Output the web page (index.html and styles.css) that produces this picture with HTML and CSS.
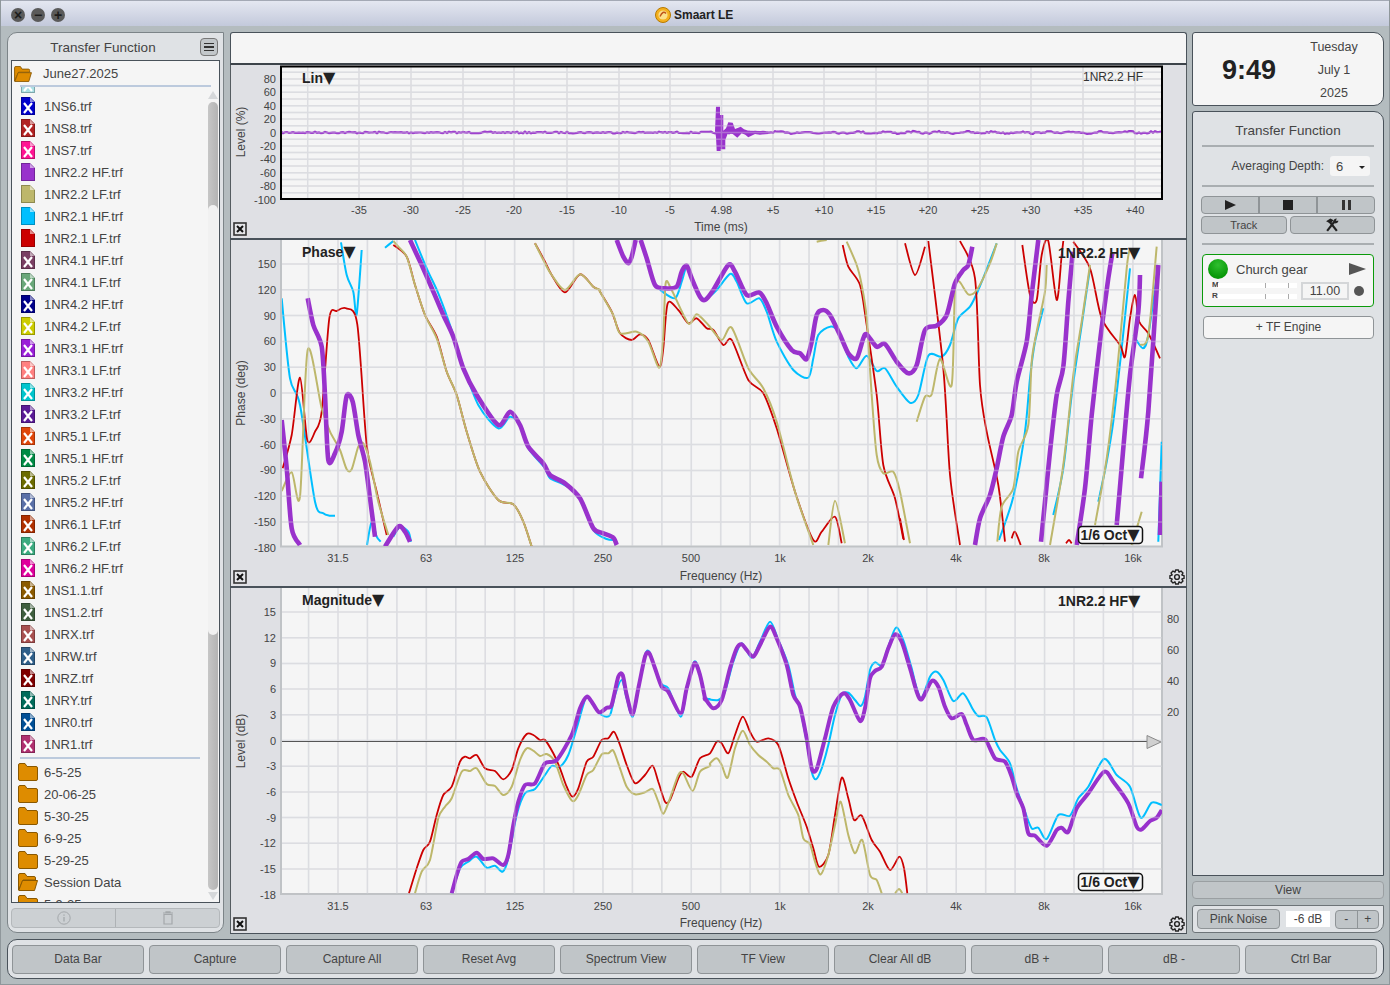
FILE: index.html
```html
<!DOCTYPE html>
<html lang="en">
<head>
<meta charset="utf-8">
<title>Smaart LE</title>
<link rel="stylesheet" href="styles.css">
</head>
<body>
<svg class="defs" width="0" height="0" aria-hidden="true">
  <symbol id="doc" viewBox="0 0 14 18">
    <path d="M0 0H9L14 5V18H0Z" fill="currentColor"/>
    <path d="M.5 .5H8.8L13.5 5.2V17.5H.5Z" fill="none" stroke="#000" stroke-opacity=".25"/>
    <path d="M9 0.6L13.4 5H9Z" fill="#fff" fill-opacity=".55"/>
  </symbol>
  <symbol id="docx" viewBox="0 0 14 18">
    <path d="M0 0H9L14 5V18H0Z" fill="currentColor"/>
    <path d="M.5 .5H8.8L13.5 5.2V17.5H.5Z" fill="none" stroke="#000" stroke-opacity=".25"/>
    <path d="M9 0.6L13.4 5H9Z" fill="#fff" fill-opacity=".55"/>
    <path d="M3 6L11 16M11 6L3 16" stroke="#fff" stroke-width="2.2" fill="none"/>
  </symbol>
  <symbol id="folder" viewBox="0 0 20 18">
    <path d="M.5 2Q.5 .5 2 .5H7L9 3.5H18Q19.5 3.5 19.5 5V16Q19.5 17.5 18 17.5H2Q.5 17.5 .5 16Z" fill="#de8c00" stroke="#8a5800"/>
  </symbol>
  <symbol id="folder-open" viewBox="0 0 20 18">
    <path d="M.5 2Q.5 .5 2 .5H7L9 3.5H16Q17.5 3.5 17.5 5V7H5L.5 17Z" fill="#de8c00" stroke="#8a5800"/>
    <path d="M4.5 7.5H19.5L16.5 17.5H.8Z" fill="#de8c00" stroke="#8a5800"/>
  </symbol>
</svg>

<div class="window">
  <header class="titlebar">
    <div class="lights">
      <span class="light">×</span><span class="light">−</span><span class="light">+</span>
    </div>
    <div class="title">
      <svg class="logo" viewBox="0 0 16 16"><circle cx="8" cy="8" r="7.5" fill="#f4b01e" stroke="#b87a00"/><circle cx="8" cy="8" r="4.6" fill="#fbe08a"/><path d="M5 9.5Q8 3 11 6.5" stroke="#c0541a" stroke-width="1.4" fill="none"/></svg>
      <span>Smaart LE</span>
    </div>
  </header>

  <div class="main">
    <aside class="left">
      <div class="left-head">
        <span class="left-title">Transfer Function</span>
        <button class="menu-btn" aria-label="Menu"><i></i><i></i><i></i></button>
      </div>
      <div class="listbox">
        <div class="session">
          <svg class="session-ico"><use href="#folder-open"/></svg>
          <span>June27.2025</span>
        </div>
        <div class="rule rule-wide"></div>
        <div class="scrollpane">
          <div class="row row-clip"><svg class="ico c-pale"><use href="#docx"/></svg></div>
          <div class="row"><svg class="ico c01"><use href="#docx"/></svg>1NS6.trf</div>
          <div class="row"><svg class="ico c02"><use href="#docx"/></svg>1NS8.trf</div>
          <div class="row"><svg class="ico c03"><use href="#docx"/></svg>1NS7.trf</div>
          <div class="row"><svg class="ico c04"><use href="#doc"/></svg>1NR2.2 HF.trf</div>
          <div class="row"><svg class="ico c05"><use href="#doc"/></svg>1NR2.2 LF.trf</div>
          <div class="row"><svg class="ico c06"><use href="#doc"/></svg>1NR2.1 HF.trf</div>
          <div class="row"><svg class="ico c07"><use href="#doc"/></svg>1NR2.1 LF.trf</div>
          <div class="row"><svg class="ico c08"><use href="#docx"/></svg>1NR4.1 HF.trf</div>
          <div class="row"><svg class="ico c09"><use href="#docx"/></svg>1NR4.1 LF.trf</div>
          <div class="row"><svg class="ico c10"><use href="#docx"/></svg>1NR4.2 HF.trf</div>
          <div class="row"><svg class="ico c11"><use href="#docx"/></svg>1NR4.2 LF.trf</div>
          <div class="row"><svg class="ico c12"><use href="#docx"/></svg>1NR3.1 HF.trf</div>
          <div class="row"><svg class="ico c13"><use href="#docx"/></svg>1NR3.1 LF.trf</div>
          <div class="row"><svg class="ico c14"><use href="#docx"/></svg>1NR3.2 HF.trf</div>
          <div class="row"><svg class="ico c15"><use href="#docx"/></svg>1NR3.2 LF.trf</div>
          <div class="row"><svg class="ico c16"><use href="#docx"/></svg>1NR5.1 LF.trf</div>
          <div class="row"><svg class="ico c17"><use href="#docx"/></svg>1NR5.1 HF.trf</div>
          <div class="row"><svg class="ico c18"><use href="#docx"/></svg>1NR5.2 LF.trf</div>
          <div class="row"><svg class="ico c19"><use href="#docx"/></svg>1NR5.2 HF.trf</div>
          <div class="row"><svg class="ico c20"><use href="#docx"/></svg>1NR6.1 LF.trf</div>
          <div class="row"><svg class="ico c21"><use href="#docx"/></svg>1NR6.2 LF.trf</div>
          <div class="row"><svg class="ico c22"><use href="#docx"/></svg>1NR6.2 HF.trf</div>
          <div class="row"><svg class="ico c23"><use href="#docx"/></svg>1NS1.1.trf</div>
          <div class="row"><svg class="ico c24"><use href="#docx"/></svg>1NS1.2.trf</div>
          <div class="row"><svg class="ico c25"><use href="#docx"/></svg>1NRX.trf</div>
          <div class="row"><svg class="ico c26"><use href="#docx"/></svg>1NRW.trf</div>
          <div class="row"><svg class="ico c27"><use href="#docx"/></svg>1NRZ.trf</div>
          <div class="row"><svg class="ico c28"><use href="#docx"/></svg>1NRY.trf</div>
          <div class="row"><svg class="ico c29"><use href="#docx"/></svg>1NR0.trf</div>
          <div class="row"><svg class="ico c30"><use href="#docx"/></svg>1NR1.trf</div>
          <div class="rule rule-narrow"></div>
          <div class="row row-folder"><svg class="fold"><use href="#folder"/></svg>6-5-25</div>
          <div class="row row-folder"><svg class="fold"><use href="#folder"/></svg>20-06-25</div>
          <div class="row row-folder"><svg class="fold"><use href="#folder"/></svg>5-30-25</div>
          <div class="row row-folder"><svg class="fold"><use href="#folder"/></svg>6-9-25</div>
          <div class="row row-folder"><svg class="fold"><use href="#folder"/></svg>5-29-25</div>
          <div class="row row-folder"><svg class="fold"><use href="#folder-open"/></svg>Session Data</div>
          <div class="row row-folder"><svg class="fold"><use href="#folder"/></svg>5-9-25</div>
        </div>
        <div class="scroll-up"></div>
        <div class="scroll-track"><div class="scroll-thumb"></div></div>
        <div class="scroll-down"></div>
      </div>
      <div class="left-tools">
        <div class="tool">
          <svg width="14" height="14" viewBox="0 0 14 14"><circle cx="7" cy="7" r="6.2" fill="none" stroke="#a4a8ab"/><path d="M7 6V10.5M7 3.4V4.8" stroke="#a4a8ab" stroke-width="1.3"/></svg>
        </div>
        <div class="tool">
          <svg width="12" height="14" viewBox="0 0 12 14"><path d="M2 3.5H10V13H2ZM1 2H11M4 2V.8H8V2" fill="none" stroke="#a4a8ab" stroke-width="1.2"/></svg>
        </div>
      </div>
    </aside>

    <section class="center">
      <div class="strip"></div>
      <div class="panel panel-imp"><svg id="chart-imp" class="chart" viewBox="230 65 957 174"></svg></div>
      <div class="panel panel-phase"><svg id="chart-phase" class="chart" viewBox="230 239 957 348"></svg></div>
      <div class="panel panel-mag"><svg id="chart-mag" class="chart" viewBox="230 587 957 347"></svg></div>
    </section>

    <aside class="right">
      <div class="clock">
        <div class="time">9:49</div>
        <div class="date"><span>Tuesday</span><span>July 1</span><span>2025</span></div>
      </div>
      <div class="control">
        <div class="ctl-title">Transfer Function</div>
        <div class="hr"></div>
        <div class="avg">
          <span>Averaging Depth:</span>
          <div class="select"><span>6</span><i class="caret"></i></div>
        </div>
        <div class="hr"></div>
        <div class="transport">
          <div class="seg"><svg width="11" height="10" viewBox="0 0 11 10"><path d="M0 0L11 5L0 10Z" fill="#222"/></svg></div>
          <div class="seg"><svg width="10" height="10" viewBox="0 0 10 10"><path d="M0 0H10V10H0Z" fill="#222"/></svg></div>
          <div class="seg"><svg width="9" height="10" viewBox="0 0 9 10"><path d="M0 0H3V10H0ZM6 0H9V10H6Z" fill="#333"/></svg></div>
        </div>
        <div class="track-row">
          <div class="mini">Track</div>
          <div class="mini"><svg width="14" height="14" viewBox="0 0 13 13"><path d="M2 12L9 3M11 12L4 3" stroke="#222" stroke-width="2" fill="none"/><path d="M1 3L5 .5 8 2 5 5ZM8 3Q8 .5 11 .5L10 2.500 12.500 2.500Q12 5 9 5Z" fill="#222"/></svg></div>
        </div>
        <div class="hr hr-engine"></div>
        <div class="engine">
          <div class="engine-top">
            <span class="led"></span>
            <span class="engine-name">Church gear</span>
            <svg class="engine-play" width="17" height="12" viewBox="0 0 17 12"><path d="M0 0L17 6L0 12Z" fill="#555"/></svg>
          </div>
          <div class="engine-bottom">
            <div class="meters">
              <div class="meter"><b>M</b><span class="bar"><i></i><i></i></span></div>
              <div class="meter"><b>R</b><span class="bar"><i></i><i></i></span></div>
            </div>
            <div class="delay">11.00</div>
            <span class="dot"></span>
          </div>
        </div>
        <div class="add-engine">+ TF Engine</div>
      </div>
      <div class="view-btn">View</div>
      <div class="noise">
        <div class="noise-btn">Pink Noise</div>
        <div class="noise-val">-6 dB</div>
        <div class="stepper"><span>-</span><span>+</span></div>
      </div>
    </aside>
  </div>

  <footer class="bottom">
    <div class="bar-btn">Data Bar</div>
    <div class="bar-btn">Capture</div>
    <div class="bar-btn">Capture All</div>
    <div class="bar-btn">Reset Avg</div>
    <div class="bar-btn">Spectrum View</div>
    <div class="bar-btn">TF View</div>
    <div class="bar-btn">Clear All dB</div>
    <div class="bar-btn">dB +</div>
    <div class="bar-btn">dB -</div>
    <div class="bar-btn">Ctrl Bar</div>
  </footer>
</div>
<script src="charts.js"></script>
</body>
</html>
```
FILE: styles.css
```css
* { box-sizing: border-box; }
html, body { margin: 0; padding: 0; }
body {
  width: 1390px;
  height: 985px;
  overflow: hidden;
  font-family: "Liberation Sans", Arial, sans-serif;
  color: #333;
  background: #b4bcbf;
}
.defs { position: absolute; }
.window {
  width: 1390px;
  height: 985px;
  display: flex;
  flex-direction: column;
  border: 1px solid #8f979b;
  border-top: 0;
}

/* title bar */
.titlebar {
  height: 26px;
  flex: none;
  display: flex;
  align-items: center;
  position: relative;
  padding-top: 2px;
  background: linear-gradient(#e4e7f1, #c3c9db);
  border-top: 1px solid #a4a9b5;
}
.lights { display: flex; gap: 6px; padding-left: 10px; }
.light {
  width: 14px;
  height: 14px;
  border-radius: 50%;
  background: #5a5a5a;
  color: #1c1c1c;
  font-size: 14px;
  font-weight: bold;
  line-height: 14px;
  text-align: center;
}
.title {
  position: absolute;
  left: 654px;
  top: 6px;
  display: flex;
  align-items: center;
  gap: 3px;
  font-size: 12px;
  font-weight: bold;
  color: #222;
}
.logo { width: 16px; height: 16px; }

/* main columns */
.main {
  flex: none;
  height: 908px;
  display: flex;
  padding: 6px 5px 0 6px;
}

/* left panel */
.left {
  width: 217px;
  height: 901px;
  flex: none;
  margin-right: 6px;
  background: #dfe2e5;
  border: 1px solid #7c8488;
  border-radius: 10px 0 10px 10px;
  padding: 0 3px;
  display: flex;
  flex-direction: column;
}
.left-head {
  height: 27px;
  flex: none;
  display: flex;
  align-items: center;
  position: relative;
  padding-top: 2px;
}
.left-title { width: 184px; text-align: center; font-size: 13.5px; color: #444; }
.menu-btn {
  position: absolute;
  left: 189px;
  top: 5px;
  width: 18px;
  height: 18px;
  padding: 0;
  border: 1px solid #777;
  border-radius: 4px;
  background: #c2c7ca;
  display: flex;
  flex-direction: column;
  align-items: center;
  justify-content: center;
  gap: 2px;
}
.menu-btn i { display: block; width: 10px; height: 1.5px; background: #333; }
.listbox {
  width: 209px;
  height: 843px;
  flex: none;
  position: relative;
  background: #f5f5f5;
  border: 1px solid #49525a;
  display: flex;
  flex-direction: column;
}
.session {
  height: 24px;
  flex: none;
  display: flex;
  align-items: center;
  font-size: 13px;
  color: #444;
  padding: 1px 0 0 2px;
}
.session-ico { width: 18px; height: 16px; margin-right: 11px; }
.rule { height: 2px; flex: none; background: #bccadd; }
.rule-wide { width: 191px; margin-left: 8px; }
.rule-narrow { width: 180px; margin: 2px 0 2px 8px; }
.scrollpane { flex: 1; overflow: hidden; }
.row {
  height: 22px;
  display: flex;
  align-items: center;
  font-size: 13px;
  color: #444;
  padding-left: 9px;
}
.row-clip { margin-top: -14px; }
.ico { width: 14px; height: 18px; margin-right: 9px; flex: none; }
.row-folder { padding-left: 6px; }
.fold { width: 20px; height: 18px; margin-right: 6px; flex: none; }
.scroll-track {
  position: absolute;
  left: 196px;
  top: 41px;
  width: 10px;
  height: 788px;
  border-radius: 5px;
  background: linear-gradient(90deg, #c6c6c6, #b4b4b4);
}
.scroll-thumb {
  position: absolute;
  left: 0;
  top: 103px;
  width: 10px;
  height: 430px;
  border-radius: 5px;
  background: #f1f1f1;
}
.scroll-up, .scroll-down { position: absolute; left: 196px; width: 0; height: 0; border-left: 5px solid transparent; border-right: 5px solid transparent; }
.scroll-up { top: 30px; border-bottom: 8px solid #d6d8da; }
.scroll-down { top: 831px; border-top: 8px solid #d6d8da; }
.left-tools {
  width: 209px;
  height: 20px;
  flex: none;
  margin-top: 5px;
  display: flex;
  background: #ccd0d3;
  border: 1px solid #b4b8bb;
  border-radius: 4px;
}
.tool { flex: 1; display: flex; align-items: center; justify-content: center; }
.tool + .tool { border-left: 1px solid #aeb2b5; }

/* center */
.center {
  width: 957px;
  flex: none;
  height: 902px;
  display: flex;
  flex-direction: column;
  margin-right: 5px;
}
.strip {
  height: 33px;
  flex: none;
  background: #f5f5f5;
  border: 1px solid #49525a;
  border-bottom: 2px solid #3d444a;
  border-radius: 3px 3px 0 0;
}
.panel { flex: none; background: #dfe0e4; border-left: 1px solid #555c60; border-right: 1px solid #555c60; }
.panel-imp { height: 174px; }
.panel-phase { height: 348px; }
.panel-mag { height: 347px; }
.chart { display: block; width: 957px; margin-left: -1px; height: 100%; font-family: "Liberation Sans", Arial, sans-serif; }

/* right */
.right { width: 192px; flex: none; display: flex; flex-direction: column; }
.clock {
  height: 74px;
  flex: none;
  display: flex;
  align-items: center;
  background: #f5f5f5;
  border: 1px solid #49525a;
  border-radius: 3px 10px 10px 3px;
}
.time { width: 112px; text-align: center; font-size: 27px; font-weight: bold; color: #222; margin-top: 2px; }
.date { width: 58px; margin-top: 2px; display: flex; flex-direction: column; align-items: center; gap: 8px; font-size: 12.500px; line-height: 15px; color: #444; }
.control {
  height: 765px;
  flex: none;
  margin-top: 5px;
  background: #dfe2e5;
  border: 1px solid #49525a;
  border-radius: 3px 10px 0 0;
  padding: 0 8px 0 8px;
}
.ctl-title { text-align: center; font-size: 13.5px; color: #444; line-height: 16px; margin-top: 11px; height: 22px; }
.hr { height: 2px; background: #a9aeb1; margin: 0 1px; }
.avg { height: 38px; display: flex; align-items: center; justify-content: flex-end; gap: 6px; font-size: 12px; color: #444; padding-right: 5px; }
.select {
  width: 40px;
  height: 20px;
  background: #f5f5f5;
  border-radius: 3px;
  display: flex;
  align-items: center;
  justify-content: space-between;
  padding: 0 5px 0 6px;
  font-size: 13px;
}
.caret { width: 0; height: 0; margin-top: 3px; border-left: 3px solid transparent; border-right: 3px solid transparent; border-top: 3px solid #222; }
.transport {
  height: 18px;
  margin-top: 9px;
  display: flex;
  background: #c0c5c8;
  border: 1px solid #8f9497;
  border-radius: 4px;
}
.seg { flex: 1; display: flex; align-items: center; justify-content: center; }
.seg + .seg { border-left: 2px solid #8f9497; }
.track-row { display: flex; gap: 3px; margin-top: 2px; }
.mini {
  flex: 1;
  height: 18px;
  display: flex;
  align-items: center;
  justify-content: center;
  background: #c0c5c8;
  border: 1px solid #8f9497;
  border-radius: 4px;
  font-size: 11px;
  color: #444;
}
.hr-engine { margin-top: 9px; }
.engine {
  height: 53px;
  margin: 9px 1px 0;
  background: #f5f5f5;
  border: 1px solid #0a9a0a;
  border-radius: 4px;
  padding: 4px 7px 0 5px;
}
.engine-top { display: flex; align-items: center; height: 20px; }
.led {
  width: 20px;
  height: 20px;
  border-radius: 50%;
  background: radial-gradient(circle at 50% 30%, #2fbf2f, #089808 70%);
  flex: none;
}
.engine-name { margin-left: 8px; font-size: 13px; color: #444; flex: 1; }
.engine-bottom { display: flex; align-items: center; margin-top: 1px; }
.meters { width: 93px; flex: none; padding-left: 4px; display: flex; flex-direction: column; gap: 1px; }
.meter { display: flex; align-items: center; height: 10px; }
.meter b { width: 6px; font-size: 8px; color: #444; flex: none; line-height: 10px; }
.bar { display: block; position: relative; width: 79px; height: 5px; background: #fff; }
.bar i { position: absolute; top: 0; width: 1px; height: 5px; background: #aaa; }
.bar i:first-child { left: 47px; }
.bar i:last-child { left: 70px; }
.delay {
  width: 48px;
  height: 18px;
  background: #f5f5f5;
  border: 2px solid #d4d6d8;
  font-size: 12.500px;
  line-height: 15px;
  text-align: center;
  color: #444;
}
.dot { width: 10px; height: 10px; border-radius: 50%; background: #555; margin-left: 5px; flex: none; }
.add-engine {
  height: 23px;
  margin: 9px 1px 0 2px;
  background: #f5f5f5;
  border: 1px solid #8f9497;
  border-radius: 4px;
  font-size: 12px;
  line-height: 21px;
  text-align: center;
  color: #444;
}
.view-btn {
  height: 18px;
  flex: none;
  margin-top: 5px;
  background: #c0c5c8;
  border: 1px solid #9a9fa2;
  border-radius: 4px;
  font-size: 12px;
  line-height: 17px;
  text-align: center;
  color: #444;
}
.noise {
  height: 28px;
  flex: none;
  margin-top: 6px;
  display: flex;
  align-items: center;
  background: #dfe2e5;
  border: 1px solid #6d7478;
  border-radius: 3px 0 10px 3px;
  padding: 0 4px;
  font-size: 12px;
  color: #444;
}
.noise-btn {
  width: 83px;
  height: 20px;
  background: #c0c5c8;
  border: 1px solid #8f9497;
  border-radius: 4px;
  line-height: 18px;
  text-align: center;
}
.noise-val { width: 44px; height: 16px; margin-left: 6px; background: #fff; text-align: center; line-height: 16px; }
.stepper {
  width: 44px;
  height: 19px;
  margin-left: 5px;
  display: flex;
  background: #c0c5c8;
  border: 1px solid #8f9497;
  border-radius: 4px;
  line-height: 17px;
  text-align: center;
}
.stepper span { flex: 1; }
.stepper span + span { border-left: 1px solid #8f9497; }

/* bottom bar */
.bottom {
  height: 40px;
  flex: none;
  margin: 5px 5px 0 6px;
  display: flex;
  align-items: center;
  gap: 5px;
  padding: 0 7px 0 4px;
  background: #dfe2e5;
  border: 1px solid #49525a;
  border-radius: 10px;
}
.bar-btn {
  width: 132px;
  height: 29px;
  flex: none;
  background: #c0c5c8;
  border: 1px solid #8f9497;
  border-radius: 4px;
  font-size: 12px;
  line-height: 27px;
  text-align: center;
  color: #444;
}

/* file icon colours */
.c-pale { color: #a9dfe4; }
.c01 { color: #0000cd; } .c02 { color: #b22222; } .c03 { color: #ff1493; }
.c04 { color: #9932cc; } .c05 { color: #bdb76b; } .c06 { color: #00bfff; }
.c07 { color: #cc0000; } .c08 { color: #7a3f63; } .c09 { color: #6aa87a; }
.c10 { color: #00008b; } .c11 { color: #cdcd00; } .c12 { color: #9a1fd8; }
.c13 { color: #ff8080; } .c14 { color: #00c5cd; } .c15 { color: #5a1a96; }
.c16 { color: #e0460a; } .c17 { color: #008b45; } .c18 { color: #6b6b00; }
.c19 { color: #5a70a8; } .c20 { color: #b03000; } .c21 { color: #3cab80; }
.c22 { color: #e0009c; } .c23 { color: #8b5a00; } .c24 { color: #3f5f3f; }
.c25 { color: #a85050; } .c26 { color: #2f5f8a; } .c27 { color: #800000; }
.c28 { color: #006b5a; } .c29 { color: #004f96; } .c30 { color: #b03070; }

/* chart internals */
.plot-bg { fill: #f5f5f5; }
.grid { stroke: #dcdde1; stroke-width: 1.5; fill: none; }
.grid-over { opacity: .35; }
.divider { stroke: #49525a; stroke-width: 1; }
.frame-black { fill: none; stroke: #000; stroke-width: 2; }
.frame-grey { fill: none; stroke: #c0c3c6; stroke-width: 2; }
.tick { font-size: 11px; fill: #444; }
.axis { font-size: 12px; fill: #444; }
.head { font-size: 14px; font-weight: bold; fill: #222; }
.head-small { font-size: 12px; fill: #333; }
.tri { font-family: "DejaVu Sans", sans-serif; font-size: 16px; }
.tr { fill: none; stroke-linejoin: round; stroke-linecap: butt; }
.tr-purple { stroke: #9932cc; stroke-width: 4.600; }
.tr-purple-m { stroke: #9932cc; stroke-width: 4; }
.tr-blue { stroke: #00bfff; stroke-width: 2; }
.tr-red { stroke: #cc0000; stroke-width: 1.800; }
.tr-tan { stroke: #bdb76b; stroke-width: 2; }
.zero { stroke: #555; stroke-width: 1; }
.imp-fill { fill: #9932cc; }
.imp-line { fill: none; stroke: #9932cc; stroke-width: 2.200; }
.close-box { fill: #e4e5e8; stroke: #333; stroke-width: 1.600; }
.close-x { stroke: #111; stroke-width: 2; }
.badge { fill: #f8f8f8; stroke: #111; stroke-width: 1.500; }
.gear { fill: none; stroke: #222; stroke-width: 1.400; stroke-linejoin: round; }
.marker { fill: #d0d0d0; stroke: #8a8a8a; }
```
FILE: charts.js
```js
(function () {
  var NS = 'http://www.w3.org/2000/svg';
  function el(parent, name, attrs, text) {
    var e = document.createElementNS(NS, name);
    for (var k in attrs) e.setAttribute(k, attrs[k]);
    if (text !== undefined) e.textContent = text;
    parent.appendChild(e);
    return e;
  }
  function hline(p, x1, x2, y, cls) { el(p, 'line', { x1: x1, x2: x2, y1: y, y2: y, 'class': cls }); }
  function vline(p, x, y1, y2, cls) { el(p, 'line', { x1: x, x2: x, y1: y1, y2: y2, 'class': cls }); }

  // a flat [zx,zy,zx,zy...] list measured on a 3x crop with origin (ox,oy)
  function pts(ox, oy, flat) {
    var out = [];
    for (var i = 0; i < flat.length; i += 2) out.push([ox + flat[i] / 3, oy + flat[i + 1] / 3]);
    return out;
  }
  // Catmull-Rom through the points, gently
  function smooth(p) {
    var d = 'M' + p[0][0].toFixed(1) + ' ' + p[0][1].toFixed(1);
    var t = 0.14;
    for (var i = 0; i < p.length - 1; i++) {
      var a = p[Math.max(i - 1, 0)], b = p[i], c = p[i + 1], e = p[Math.min(i + 2, p.length - 1)];
      d += 'C' + (b[0] + (c[0] - a[0]) * t).toFixed(1) + ' ' + (b[1] + (c[1] - a[1]) * t).toFixed(1) + ' ' +
        (c[0] - (e[0] - b[0]) * t).toFixed(1) + ' ' + (c[1] - (e[1] - b[1]) * t).toFixed(1) + ' ' +
        c[0].toFixed(1) + ' ' + c[1].toFixed(1);
    }
    return d;
  }
  function trace(p, cls, segs) {
    segs.forEach(function (s) { el(p, 'path', { d: smooth(s), 'class': 'tr ' + cls }); });
  }
  function closeBox(svg, y) {
    el(svg, 'rect', { x: 234, y: y, width: 12, height: 12, 'class': 'close-box' });
    el(svg, 'path', { d: 'M237 ' + (y + 3) + 'L243 ' + (y + 9) + 'M243 ' + (y + 3) + 'L237 ' + (y + 9), 'class': 'close-x' });
  }
  function gear(svg, cx, cy) {
    var d = '', n = 8, R = 7.2, r = 5.3;
    for (var i = 0; i < n; i++) {
      var s = i * 2 * Math.PI / n, w = Math.PI / n;
      [[r, -w * 0.95], [R, -w * 0.5], [R, w * 0.5], [r, w * 0.95]].forEach(function (q, j) {
        d += ((i === 0 && j === 0) ? 'M' : 'L') + (cx + q[0] * Math.cos(s + q[1])).toFixed(2) + ' ' + (cy + q[0] * Math.sin(s + q[1])).toFixed(2);
      });
    }
    el(svg, 'path', { d: d + 'Z', 'class': 'gear' });
    el(svg, 'circle', { cx: cx, cy: cy, r: 2.4, 'class': 'gear' });
  }
  function clip(svg, id, x, y, w, h) {
    var c = el(svg, 'clipPath', { id: id });
    el(c, 'rect', { x: x, y: y, width: w, height: h });
    return el(svg, 'g', { 'clip-path': 'url(#' + id + ')' });
  }
  function triSpan() {
    var t = document.createElementNS(NS, 'tspan');
    t.setAttribute('class', 'tri');
    t.textContent = '▼';
    return t;
  }
  function header(svg, x, y, label) {
    el(svg, 'text', { x: x, y: y, 'class': 'head' }, label).appendChild(triSpan());
  }
  function yLabel(svg, y, label) {
    el(svg, 'text', { x: 245, y: y, transform: 'rotate(-90 245 ' + y + ')', 'text-anchor': 'middle', 'class': 'axis' }, label);
  }
  function badge(svg, y) {
    el(svg, 'rect', { x: 1078.5, y: y, width: 64, height: 17, rx: 3.5, 'class': 'badge' });
    el(svg, 'text', { x: 1080.5, y: y + 13.2, 'class': 'head' }, '1/6 Oct').appendChild(triSpan());
  }
  var X0 = 281, X1 = 1162;
  var octs = [[338, '31.5'], [426, '63'], [515, '125'], [603, '250'], [691, '500'], [780, '1k'], [868, '2k'], [956, '4k'], [1044, '8k'], [1133, '16k']];

  function drawFreqLines(p, top, bot, ys, cls) {
    ys.forEach(function (r) { if (r[0] < bot - 1) hline(p, X0, X1, r[0], cls); });
    for (var k = -1; k < 28; k++) {
      var x = 338 + 29.44 * k;
      if (x < X1) vline(p, x, top, bot, cls);
    }
  }
  function freqGrid(svg, top, bot, ys) {
    el(svg, 'rect', { x: X0, y: top, width: X1 - X0, height: bot - top, 'class': 'plot-bg' });
    drawFreqLines(svg, top, bot, ys, 'grid');
    el(svg, 'path', { d: 'M' + X0 + ' ' + top + 'V' + bot + 'H' + X1 + 'V' + top, 'class': 'frame-grey' });
    ys.forEach(function (r) {
      el(svg, 'text', { x: 276, y: r[0] + 4, 'text-anchor': 'end', 'class': 'tick' }, r[1]);
    });
    octs.forEach(function (o) {
      el(svg, 'text', { x: o[0], y: bot + 15.5, 'text-anchor': 'middle', 'class': 'tick' }, o[1]);
    });
    el(svg, 'text', { x: 721, y: bot + 33, 'text-anchor': 'middle', 'class': 'axis' }, 'Frequency (Hz)');
  }

  /* ---------- impulse ---------- */
  (function () {
    var svg = document.getElementById('chart-imp');
    var top = 66.5, bot = 199, mid = 132.5;
    el(svg, 'rect', { x: X0, y: top, width: X1 - X0, height: bot - top, 'class': 'plot-bg' });
    for (var v = -100; v <= 100; v += 10) hline(svg, X0, X1, mid - v * 0.67, 'grid');
    var xs = [[359, '-35'], [411, '-30'], [463, '-25'], [514, '-20'], [567, '-15'], [619, '-10'], [670, '-5'], [721.5, '4.98'], [773, '+5'], [824, '+10'], [876, '+15'], [928, '+20'], [980, '+25'], [1031, '+30'], [1083, '+35'], [1135, '+40']];
    vline(svg, 307.7, top, bot, 'grid');
    xs.forEach(function (o) {
      vline(svg, o[0], top, bot, 'grid');
      el(svg, 'text', { x: o[0], y: 214, 'text-anchor': 'middle', 'class': 'tick' }, o[1]);
    });
    [80, 60, 40, 20, 0, -20, -40, -60, -80, -100].forEach(function (v) {
      el(svg, 'text', { x: 276, y: mid + 4 - v * 0.67, 'text-anchor': 'end', 'class': 'tick' }, String(v));
    });
    // noise floor, deterministic
    var d = '', seed = 7, x;
    function rnd() { seed = (seed * 16807) % 2147483647; return seed / 2147483647; }
    for (x = X0; x <= X1; x += 2) {
      var w = (x > 770) ? Math.sin(x / 4.3) * 0.7 : 0;
      d += (x === X0 ? 'M' : 'L') + x.toFixed(1) + ' ' + (mid + w + (rnd() - 0.5) * 1.6).toFixed(1);
    }
    el(svg, 'path', { d: d, 'class': 'imp-line' });
    var spike = pts(600, 60, [345, 212, 348, 140, 360, 140, 360, 165, 370, 165, 370, 212, 378, 205, 385, 187, 398, 188, 405, 207, 415, 203, 422, 200, 432, 208, 445, 212, 480, 213, 505, 215, 505, 222, 480, 224, 465, 222, 445, 232, 436, 224, 425, 220, 412, 233, 398, 222, 385, 216, 376, 240, 376, 268, 362, 268, 362, 273, 350, 273, 348, 232]);
    el(svg, 'path', { d: 'M' + spike.map(function (p) { return p[0].toFixed(1) + ' ' + p[1].toFixed(1); }).join('L') + 'Z', 'class': 'imp-fill' });
    var over = el(svg, 'g', { 'class': 'grid-over' });
    for (v = -100; v <= 100; v += 10) hline(over, X0, X1, mid - v * 0.67, 'grid');
    xs.forEach(function (o) { vline(over, o[0], top, bot, 'grid'); });
    el(svg, 'rect', { x: X0, y: top, width: X1 - X0, height: bot - top, 'class': 'frame-black' });
    header(svg, 302, 83, 'Lin');
    el(svg, 'text', { x: 1143, y: 81, 'text-anchor': 'end', 'class': 'head-small' }, '1NR2.2 HF');
    yLabel(svg, 132, 'Level (%)');
    el(svg, 'text', { x: 721, y: 231, 'text-anchor': 'middle', 'class': 'axis' }, 'Time (ms)');
    hline(svg, 230, 1187, 238.5, 'divider');
    closeBox(svg, 223);
  })();

  /* ---------- phase ---------- */
  (function () {
    var svg = document.getElementById('chart-phase');
    var labs = ['150', '120', '90', '60', '30', '0', '-30', '-60', '-90', '-120', '-150', '-180'];
    var ys = labs.map(function (l, i) { return [264 + i * 25.8, l]; });
    freqGrid(svg, 240, 546.5, ys);
    var g = clip(svg, 'clip-phase', 282, 240, 880, 306);
    var A = 230, B = 600, C = 900, Y = 235;
    trace(g, 'tr-blue', [
      pts(A, Y, [155, 190, 180, 430, 210, 510, 255, 800, 280, 835, 300, 842, 315, 842]),
      pts(A, Y, [333, 22, 350, 120, 370, 170, 380, 238, 395, 45]),
      pts(A, Y, [411, 930, 425, 860, 440, 905, 452, 920]),
      pts(A, Y, [490, 905, 510, 875, 535, 890, 543, 920]),
      pts(A, Y, [465, 38, 490, 18]),
      pts(A, Y, [555, 15, 590, 100, 625, 175, 660, 270, 695, 380, 745, 510, 805, 580, 840, 545, 870, 570, 895, 640, 945, 700, 960, 730, 1000, 748, 1045, 780, 1090, 885, 1130, 912, 1155, 915]),
      pts(B, Y, [180, 165, 225, 190, 245, 140, 260, 95, 275, 130, 300, 185, 320, 190, 350, 165, 390, 117, 410, 140, 440, 205, 478, 190, 500, 230, 530, 320, 580, 405, 625, 428, 640, 370, 655, 300, 690, 275, 715, 290, 745, 365, 770, 400, 800, 362, 830, 408, 855, 400, 890, 455, 930, 503]).concat(pts(C, Y, [55, 480, 85, 362, 125, 365, 150, 330, 175, 250, 210, 215, 235, 165, 265, 90, 290, 25])),
      pts(C, Y, [297, 915, 340, 785, 375, 590, 390, 430, 405, 320, 430, 220]),
      pts(C, Y, [460, 840, 490, 700, 515, 480, 545, 270, 570, 100]),
      pts(C, Y, [595, 800, 620, 680, 640, 560, 665, 340, 690, 100]),
      pts(C, Y, [700, 300, 728, 340, 745, 300, 775, 90]),
      pts(C, Y, [775, 920, 785, 620])
    ]);
    trace(g, 'tr-red', [
      pts(A, Y, [158, 700, 185, 600, 210, 428, 232, 615, 255, 590, 275, 530, 298, 250, 320, 228, 348, 220, 382, 268, 410, 630, 440, 770, 470, 900]),
      pts(A, Y, [490, 30, 530, 65, 555, 150, 585, 240, 620, 305, 650, 410, 680, 480, 710, 590, 750, 710, 805, 795, 850, 808, 880, 860, 905, 935]),
      pts(A, Y, [915, 25, 945, 80, 965, 120, 1005, 172, 1050, 118, 1090, 155, 1110, 165]).concat(pts(B, Y, [0, 170, 35, 230, 60, 295, 95, 315, 120, 298, 145, 315, 178, 395, 190, 340, 203, 205, 235, 225, 265, 265, 290, 250, 320, 280, 340, 285, 370, 330, 395, 315, 445, 435, 490, 475, 530, 580, 585, 770, 640, 915, 665, 890, 705, 845, 725, 925])),
      pts(B, Y, [728, 30, 745, 95, 780, 150, 800, 270, 830, 480, 850, 690, 885, 790, 910, 912]),
      pts(C, Y, [15, 25, 45, 120, 75, 35]),
      pts(C, Y, [85, 18, 130, 400, 150, 720, 180, 930]),
      pts(C, Y, [180, 18, 225, 130, 240, 450, 260, 590, 295, 750, 315, 920]),
      pts(C, Y, [335, 910, 345, 890, 362, 930]),
      pts(C, Y, [367, 30, 390, 180, 410, 195, 425, 60, 445, 18, 470, 195, 485, 60, 490, 18]),
      pts(C, Y, [520, 20, 570, 100, 605, 250, 660, 330, 675, 365, 690, 250, 705, 180, 718, 260, 745, 295, 780, 370]),
      pts(C, Y, [498, 925, 507, 915, 515, 925]),
      pts(C, Y, [0, 850, 12, 915])
    ]);
    trace(g, 'tr-tan', [
      pts(A, Y, [155, 768, 185, 712, 210, 785, 233, 345, 275, 520, 300, 590, 330, 645, 350, 703, 365, 703, 385, 635, 400, 625, 420, 680, 445, 800, 475, 900]),
      pts(A, Y, [490, 18, 505, 35, 530, 65, 555, 150, 585, 240, 620, 310, 650, 410, 680, 480, 710, 590, 750, 710, 805, 795, 850, 808, 880, 860, 905, 935]),
      pts(A, Y, [915, 25, 945, 85, 965, 120, 1005, 165, 1050, 118, 1090, 155, 1110, 165]).concat(pts(B, Y, [0, 170, 40, 240, 60, 295, 110, 290, 145, 320, 178, 398, 190, 300, 197, 145, 215, 165, 265, 265, 290, 238, 325, 270, 365, 315, 395, 278, 445, 400, 490, 460, 530, 560, 585, 770, 640, 930])),
      pts(B, Y, [650, 20, 680, 15]),
      pts(B, Y, [685, 930, 705, 797, 735, 925]),
      pts(B, Y, [740, 20, 770, 90, 785, 150, 800, 250, 815, 480, 830, 660, 850, 715, 880, 710, 900, 770, 930, 925]),
      pts(C, Y, [50, 560, 75, 485, 95, 478, 120, 372, 155, 450, 165, 160, 178, 140, 205, 178, 230, 165, 270, 85, 290, 25]),
      pts(C, Y, [292, 920, 305, 815, 340, 760, 355, 650, 385, 570, 395, 380, 410, 290, 435, 170, 440, 90]),
      pts(C, Y, [450, 930, 490, 690, 520, 420, 545, 260, 570, 90]),
      pts(C, Y, [585, 870, 620, 670, 650, 420, 680, 100, 690, 40]),
      pts(C, Y, [695, 930, 725, 830]),
      pts(C, Y, [720, 330, 745, 300, 770, 35])
    ]);
    trace(g, 'tr-purple', [
      pts(A, Y, [155, 555, 170, 700, 185, 880, 210, 930]),
      pts(A, Y, [233, 190, 250, 270, 275, 335, 285, 480, 295, 675, 315, 655, 335, 590, 350, 482, 368, 500, 385, 600, 405, 680, 420, 790, 435, 905]),
      pts(A, Y, [465, 935, 505, 875, 525, 890, 540, 920]),
      pts(A, Y, [540, 15, 575, 90, 610, 170, 640, 240, 670, 305, 700, 400, 740, 480, 805, 570, 840, 530, 870, 570, 895, 635, 940, 685, 960, 720, 1005, 745, 1050, 790, 1090, 880, 1120, 895, 1150, 908, 1160, 930]),
      pts(B, Y, [50, 15, 70, 65, 85, 85, 95, 65, 107, 15]),
      pts(B, Y, [122, 15, 140, 70, 165, 150, 195, 160, 230, 155, 245, 110, 260, 92, 275, 130, 300, 185, 315, 195, 340, 165, 385, 90, 405, 110, 440, 180, 478, 172, 500, 205, 530, 275, 575, 345, 600, 355, 620, 372, 635, 320, 650, 240, 670, 225, 690, 240, 720, 300, 745, 355, 770, 370, 790, 310, 800, 298, 830, 335, 855, 327, 890, 380, 925, 415]).concat(pts(C, Y, [50, 390, 75, 285, 110, 272, 140, 240, 165, 145, 190, 105, 205, 90, 217, 35])),
      pts(C, Y, [225, 930, 240, 850, 270, 780, 290, 700, 310, 605, 335, 540, 350, 440, 380, 320, 395, 180, 415, 15]),
      pts(C, Y, [423, 920, 435, 800, 450, 650, 470, 480, 490, 395, 505, 200, 518, 50]),
      pts(C, Y, [530, 930, 555, 760, 575, 540, 600, 320, 625, 130, 637, 55]),
      pts(C, Y, [650, 870, 670, 640, 690, 420, 715, 230, 720, 120]),
      pts(C, Y, [723, 730, 745, 530, 775, 90]),
      pts(C, Y, [780, 900, 785, 740])
    ]);
    drawFreqLines(el(g, 'g', { 'class': 'grid-over' }), 240, 546.5, ys, 'grid');
    header(svg, 302, 257, 'Phase');
    header(svg, 1058, 258, '1NR2.2 HF');
    badge(svg, 526.5);
    yLabel(svg, 393, 'Phase (deg)');
    hline(svg, 230, 1187, 239.5, 'divider');
    hline(svg, 230, 1187, 586.5, 'divider');
    closeBox(svg, 571);
    gear(svg, 1177, 577);
  })();

  /* ---------- magnitude ---------- */
  (function () {
    var svg = document.getElementById('chart-mag');
    var labs = ['15', '12', '9', '6', '3', '0', '-3', '-6', '-9', '-12', '-15', '-18'];
    var ys = labs.map(function (l, i) { return [612 + i * 25.7, l]; });
    freqGrid(svg, 588, 894, ys);
    var g = clip(svg, 'clip-mag', 282, 588, 880, 305.5);
    var A = 230, B = 700, Y = 585;
    trace(g, 'tr-blue', [
      pts(A, Y, [665, 925, 690, 850, 715, 830, 740, 815, 770, 848, 795, 842, 818, 860, 835, 820, 860, 690, 885, 625, 915, 612, 945, 570, 965, 543, 990, 545, 1015, 510, 1040, 430, 1060, 360, 1070, 335, 1090, 360, 1115, 390, 1140, 390, 1155, 330, 1175, 285, 1190, 340, 1208, 395, 1225, 315, 1245, 210, 1258, 200, 1275, 250, 1295, 298, 1315, 310, 1352, 395, 1370, 315, 1393, 230, 1410, 265, 1425, 335, 1440, 342]).concat(
        pts(B, Y, [20, 342, 55, 345, 75, 320, 100, 230, 125, 175, 155, 218, 180, 170, 210, 110, 235, 165, 265, 240, 285, 330, 300, 370, 320, 470, 335, 560, 348, 583, 365, 550, 385, 480, 405, 390, 425, 330, 445, 323, 465, 345, 482, 363, 495, 335, 510, 255, 525, 232, 545, 240, 565, 185, 588, 128, 610, 165, 635, 250, 650, 310, 665, 340, 690, 275, 710, 260, 730, 285, 760, 348, 790, 325, 820, 375, 835, 393, 860, 397, 885, 465, 900, 495, 930, 535, 950, 610, 975, 680, 995, 730, 1015, 728, 1040, 762, 1075, 690, 1110, 692, 1135, 640, 1165, 605, 1212, 522, 1250, 570, 1290, 605, 1322, 698, 1355, 653, 1385, 660]))
    ]);
    trace(g, 'tr-red', [
      pts(A, Y, [537, 925, 560, 850, 580, 795, 600, 770, 620, 690, 640, 630, 665, 605, 690, 530, 705, 515, 720, 520, 740, 510, 765, 550, 795, 558, 820, 583, 845, 555, 865, 490, 890, 447, 910, 450, 930, 465, 945, 465, 970, 505, 990, 550, 1010, 605, 1027, 635, 1045, 610, 1070, 530, 1090, 515, 1115, 465, 1135, 460, 1152, 440, 1170, 480, 1190, 540, 1215, 595, 1245, 570, 1268, 542, 1285, 590, 1305, 650, 1320, 645, 1345, 580, 1360, 560, 1385, 575, 1410, 520, 1440, 505]).concat(
        pts(B, Y, [50, 470, 65, 475, 85, 505, 105, 450, 128, 395, 150, 440, 170, 470, 205, 460, 235, 480, 265, 580, 290, 650, 320, 725, 340, 790, 357, 845, 385, 810, 405, 690, 425, 578, 445, 640, 462, 705, 485, 692, 515, 765, 540, 800, 570, 855, 598, 815, 612, 850, 622, 925]))
    ]);
    trace(g, 'tr-tan', [
      pts(A, Y, [555, 925, 575, 860, 600, 825, 625, 700, 645, 665, 665, 640, 695, 560, 720, 558, 740, 550, 770, 597, 795, 603, 820, 630, 845, 605, 870, 525, 890, 490, 910, 497, 930, 513, 950, 507, 975, 530, 1000, 600, 1027, 648, 1045, 630, 1070, 570, 1090, 555, 1115, 508, 1135, 505, 1150, 497, 1170, 550, 1190, 605, 1215, 628, 1245, 622, 1268, 612, 1285, 650, 1300, 686, 1320, 640, 1345, 570, 1360, 565, 1388, 618, 1410, 560, 1440, 543]).concat(
        pts(B, Y, [30, 535, 50, 520, 65, 540, 83, 578, 105, 490, 128, 437, 150, 480, 175, 510, 200, 530, 220, 550, 240, 555, 265, 630, 295, 690, 310, 760, 330, 778, 345, 830, 362, 868, 385, 810, 405, 720, 422, 650, 445, 750, 465, 805, 487, 765, 510, 870, 530, 885, 545, 925])),
      pts(B, Y, [585, 925, 597, 912, 607, 925])
    ]);
    trace(g, 'tr-purple-m', [
      pts(A, Y, [665, 925, 680, 870, 695, 830, 715, 822, 740, 803, 760, 822, 790, 820, 820, 840, 835, 810, 850, 720, 865, 650, 885, 600, 915, 595, 945, 535, 980, 525, 1025, 450, 1050, 370, 1070, 335, 1085, 350, 1107, 382, 1130, 368, 1145, 360, 1165, 275, 1178, 270, 1190, 330, 1208, 388, 1225, 310, 1245, 215, 1258, 205, 1275, 250, 1295, 305, 1315, 320, 1352, 385, 1370, 310, 1393, 235, 1410, 270, 1425, 340]).concat(
        pts(B, Y, [15, 340, 40, 370, 65, 345, 90, 250, 110, 190, 125, 178, 140, 195, 160, 215, 180, 180, 210, 125, 230, 160, 260, 240, 280, 330, 300, 365, 320, 460, 335, 550, 350, 552, 375, 460, 400, 365, 430, 325, 450, 345, 480, 408, 495, 370, 510, 280, 525, 258, 545, 245, 565, 190, 585, 148, 605, 170, 630, 250, 650, 320, 665, 343, 695, 288, 715, 305, 735, 365, 755, 400, 785, 387, 800, 420, 820, 465, 855, 463, 885, 520, 915, 530, 935, 575, 950, 625, 970, 670, 985, 745, 1005, 752, 1040, 782, 1070, 735, 1085, 728, 1105, 740, 1130, 670, 1165, 625, 1212, 560, 1240, 590, 1285, 655, 1310, 725, 1325, 733, 1350, 708, 1370, 698, 1385, 675]))
    ]);
    drawFreqLines(el(g, 'g', { 'class': 'grid-over' }), 588, 894, ys, 'grid');
    hline(g, 282, 1148, 741.5, 'zero');
    el(svg, 'path', { d: 'M1147 735.5L1161 742 1147 748.5Z', 'class': 'marker' });
    [[619, '80'], [650, '60'], [681, '40'], [712, '20']].forEach(function (r) {
      el(svg, 'text', { x: 1167, y: r[0] + 4, 'class': 'tick' }, r[1]);
    });
    header(svg, 302, 605, 'Magnitude');
    header(svg, 1058, 606, '1NR2.2 HF');
    badge(svg, 873.5);
    yLabel(svg, 741, 'Level (dB)');
    hline(svg, 230, 1187, 587.5, 'divider');
    hline(svg, 230, 1187, 933.5, 'divider');
    closeBox(svg, 918);
    gear(svg, 1177, 924);
  })();
})();
```
